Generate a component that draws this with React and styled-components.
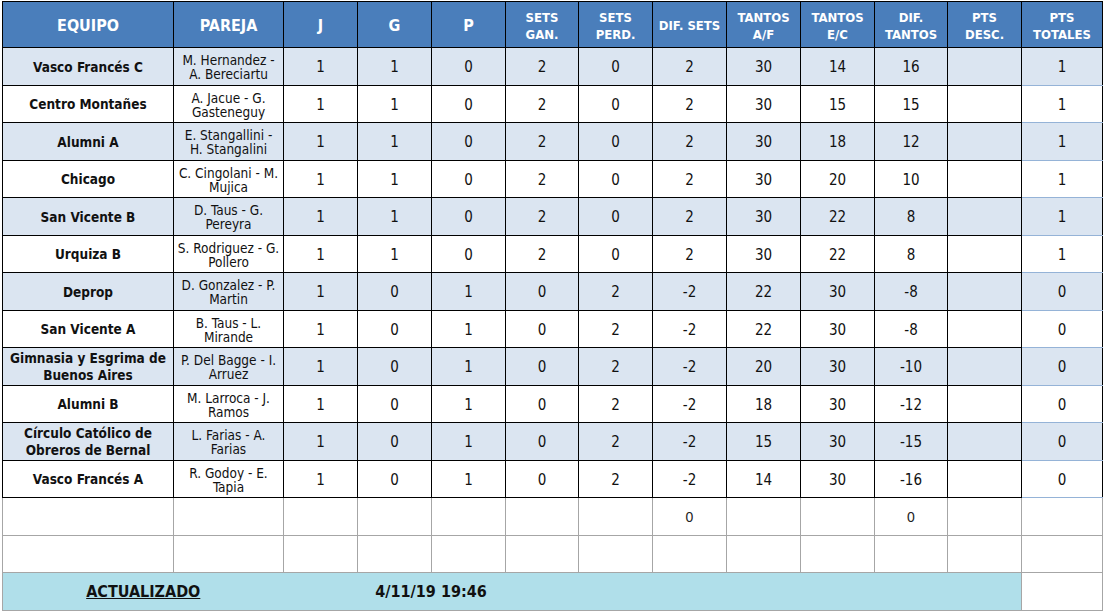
import React from 'react';
import styled, { createGlobalStyle, css } from 'styled-components';

const GlobalStyle = createGlobalStyle`
  html, body {
    margin: 0;
    padding: 0;
    background: #ffffff;
  }
  body {
    font-family: "DejaVu Sans Condensed", "DejaVu Sans", sans-serif;
    color: #111;
  }
`;

const Page = styled.div`
  padding: 1px 0 0 2px;
`;

const Table = styled.table`
  border-collapse: collapse;
  table-layout: fixed;
  width: 1101px;
`;

const HeadCell = styled.th`
  height: 43px;
  padding: 2px 2px 0;
  background: #4a7ebb;
  color: #ffffff;
  font-weight: bold;
  font-size: ${props => (props.small ? '13px' : '16px')};
  line-height: 17px;
  text-align: center;
  vertical-align: middle;
  border: 1px solid #000;
`;

const Row = styled.tr`
  height: ${props => props.h}px;
  background: ${props => (props.shade ? '#dbe5f1' : '#ffffff')};
`;

const Cell = styled.td`
  padding: 1px 2px 0;
  text-align: center;
  vertical-align: middle;
  font-size: 15px;
  border: 1px solid #000;
  white-space: nowrap;
  ${props => props.team && css`
    font-weight: bold;
    font-size: 13.5px;
    line-height: 17px;
  `}
  ${props => props.pair && css`
    font-size: 13.5px;
    line-height: 14px;
  `}
  ${props => props.total && css`
    border-top-color: #95b3d7;
    border-bottom-color: #95b3d7;
  `}
`;

const BlankCell = styled.td`
  padding: 0;
  text-align: center;
  vertical-align: middle;
  font-family: "Liberation Sans", Arial, sans-serif;
  font-size: 14px;
  color: #222;
  border: 1px solid #a6a6a6;
`;

const FooterRow = styled.tr`
  height: 38px;
`;

const FooterCell = styled.td`
  background: #b0dfea;
  text-align: center;
  vertical-align: middle;
  font-weight: bold;
  font-size: 16px;
  color: #111;
  border: 1px solid #a6a6a6;
  border-left: none;
  border-right: none;
  &:first-child {
    border-left: 1px solid #a6a6a6;
  }
`;

const Underlined = styled.span`
  text-decoration: underline;
`;

const columns = [
  { label: 'EQUIPO', width: 171 },
  { label: 'PAREJA', width: 110 },
  { label: 'J', width: 74 },
  { label: 'G', width: 74 },
  { label: 'P', width: 74 },
  { label: ['SETS', 'GAN.'], width: 73 },
  { label: ['SETS', 'PERD.'], width: 74 },
  { label: 'DIF. SETS', width: 74, small: true },
  { label: ['TANTOS', 'A/F'], width: 74 },
  { label: ['TANTOS', 'E/C'], width: 74 },
  { label: ['DIF.', 'TANTOS'], width: 73 },
  { label: ['PTS', 'DESC.'], width: 74 },
  { label: ['PTS', 'TOTALES'], width: 81 },
];

const teams = [
  { team: ['Vasco Francés C'], pair: ['M. Hernandez -', 'A. Bereciartu'], stats: [1, 1, 0, 2, 0, 2, 30, 14, 16], pts: 1 },
  { team: ['Centro Montañes'], pair: ['A. Jacue - G.', 'Gasteneguy'], stats: [1, 1, 0, 2, 0, 2, 30, 15, 15], pts: 1 },
  { team: ['Alumni A'], pair: ['E. Stangallini -', 'H. Stangalini'], stats: [1, 1, 0, 2, 0, 2, 30, 18, 12], pts: 1 },
  { team: ['Chicago'], pair: ['C. Cingolani - M.', 'Mujica'], stats: [1, 1, 0, 2, 0, 2, 30, 20, 10], pts: 1 },
  { team: ['San Vicente B'], pair: ['D. Taus - G.', 'Pereyra'], stats: [1, 1, 0, 2, 0, 2, 30, 22, 8], pts: 1 },
  { team: ['Urquiza B'], pair: ['S. Rodriguez - G.', 'Pollero'], stats: [1, 1, 0, 2, 0, 2, 30, 22, 8], pts: 1 },
  { team: ['Deprop'], pair: ['D. Gonzalez - P.', 'Martin'], stats: [1, 0, 1, 0, 2, -2, 22, 30, -8], pts: 0 },
  { team: ['San Vicente A'], pair: ['B. Taus - L.', 'Mirande'], stats: [1, 0, 1, 0, 2, -2, 22, 30, -8], pts: 0 },
  { team: ['Gimnasia y Esgrima de', 'Buenos Aires'], pair: ['P. Del Bagge - I.', 'Arruez'], stats: [1, 0, 1, 0, 2, -2, 20, 30, -10], pts: 0 },
  { team: ['Alumni B'], pair: ['M. Larroca - J.', 'Ramos'], stats: [1, 0, 1, 0, 2, -2, 18, 30, -12], pts: 0 },
  { team: ['Círculo Católico de', 'Obreros de Bernal'], pair: ['L. Farias - A.', 'Farias'], stats: [1, 0, 1, 0, 2, -2, 15, 30, -15], pts: 0 },
  { team: ['Vasco Francés A'], pair: ['R. Godoy - E.', 'Tapia'], stats: [1, 0, 1, 0, 2, -2, 14, 30, -16], pts: 0 },
];

const blankRows = [
  ['', '', '', '', '', '', '', 0, '', '', 0, '', ''],
  ['', '', '', '', '', '', '', '', '', '', '', '', ''],
];

const Lines = ({ lines }) =>
  lines.map((line, i) => (
    <React.Fragment key={i}>
      {i > 0 && <br />}
      {line}
    </React.Fragment>
  ));

const App = () => (
  <Page>
    <GlobalStyle />
    <Table>
      <colgroup>
        {columns.map((c, i) => <col key={i} style={{ width: c.width }} />)}
      </colgroup>
      <thead>
        <tr>
          {columns.map((c, i) => (
            <HeadCell key={i} small={Array.isArray(c.label) || c.small}>
              {Array.isArray(c.label) ? <Lines lines={c.label} /> : c.label}
            </HeadCell>
          ))}
        </tr>
      </thead>
      <tbody>
        {teams.map((t, i) => (
          <Row key={t.team.join(' ')} shade={i % 2 === 0} h={i % 2 === 0 ? 38 : 37}>
            <Cell team><Lines lines={t.team} /></Cell>
            <Cell pair><Lines lines={t.pair} /></Cell>
            {t.stats.map((s, j) => <Cell key={j}>{s}</Cell>)}
            <Cell />
            <Cell total>{t.pts}</Cell>
          </Row>
        ))}
        {blankRows.map((r, i) => (
          <Row key={`blank-${i}`} h={i % 2 === 0 ? 38 : 37}>
            {r.map((v, j) => <BlankCell key={j}>{v}</BlankCell>)}
          </Row>
        ))}
        <FooterRow>
          <FooterCell colSpan={2}><Underlined>ACTUALIZADO</Underlined></FooterCell>
          <FooterCell colSpan={4}>4/11/19 19:46</FooterCell>
          <FooterCell colSpan={6} />
          <BlankCell />
        </FooterRow>
      </tbody>
    </Table>
  </Page>
);

export default App;
